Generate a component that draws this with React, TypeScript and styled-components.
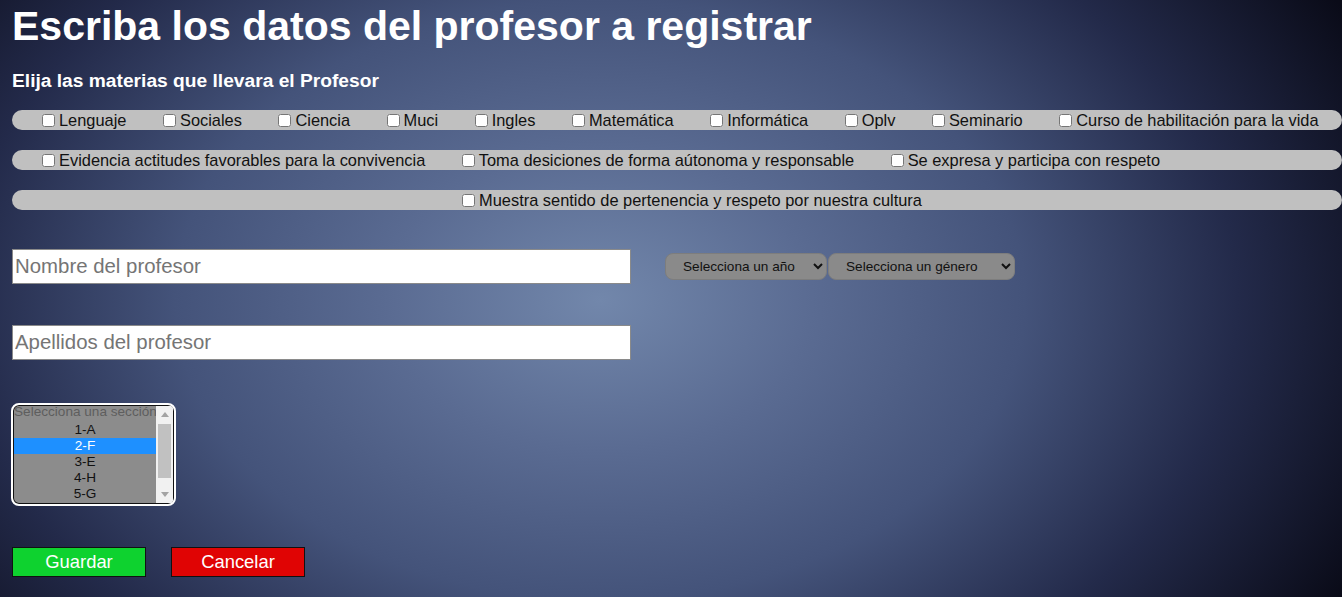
import React from "react";
import styled, { createGlobalStyle } from "styled-components";

const GlobalStyle = createGlobalStyle`
  html, body {
    margin: 0;
    height: 100%;
  }
  body {
    overflow: hidden;
    font-family: "Liberation Sans", Arial, sans-serif;
    background: radial-gradient(ellipse 850px 600px at 600px 300px, #7287ab 0%, #5a6b92 25%, #44537a 50%, #232a4a 75%, #0a0b18 100%);
  }
`;

const Page = styled.div`
  padding: 3px 0 0 12px;
  display: flex;
  flex-direction: column;
  align-items: flex-start;
`;

const Title = styled.h1`
  margin: 0;
  font-size: 41px;
  line-height: 46px;
  font-weight: bold;
  color: #fff;
`;

const Subtitle = styled.h3`
  margin: 21px 0 0;
  font-size: 19.2px;
  line-height: 22px;
  font-weight: bold;
  color: #fff;
`;

const Bars = styled.div`
  margin-top: 18px;
  display: flex;
  flex-direction: column;
  gap: 20px;
`;

const Bar = styled.div<{ $center?: boolean }>`
  width: 1330px;
  height: 20px;
  box-sizing: border-box;
  padding-left: 26px;
  display: flex;
  align-items: center;
  justify-content: ${(p) => (p.$center ? "center" : "flex-start")};
  gap: 32.5px;
  background: #c0c0c0;
  border-radius: 10px;
`;

const Item = styled.label`
  display: inline-flex;
  align-items: center;
  font-size: 16.4px;
  color: #111;
  white-space: nowrap;
`;

const Check = styled.input`
  margin: 3px 4px 3px 4px;
  width: 13px;
  height: 13px;
`;

const FieldRow = styled.div<{ $top: number }>`
  margin-top: ${(p) => p.$top}px;
  display: flex;
  align-items: center;
  gap: 34px;
`;

const TextInput = styled.input`
  width: 619px;
  height: 35px;
  box-sizing: border-box;
  border: 1px solid #8a8a8a;
  padding: 1px 2px;
  font-family: "Liberation Sans", Arial, sans-serif;
  font-size: 20.4px;
  background: #fff;
  &::placeholder {
    color: #757575;
  }
`;

const SelectGroup = styled.div`
  display: flex;
  gap: 1px;
`;

const Dropdown = styled.select<{ $w: number }>`
  width: ${(p) => p.$w}px;
  height: 27px;
  padding-left: 13px;
  border-radius: 8px;
  border: 1px solid #7d7d7d;
  background-color: #8a8a8a;
  color: #111;
  font-family: "Liberation Sans", Arial, sans-serif;
  font-size: 13.6px;
`;

const ListBox = styled.div`
  margin-top: 43px;
  margin-left: -1px;
  width: 165px;
  height: 103px;
  box-sizing: border-box;
  border: 2px solid #fff;
  border-radius: 8px;
  box-shadow: inset 0 0 0 1px #111;
  padding: 1px;
  display: flex;
  overflow: hidden;
  background: #8c8c8c;
`;

const Viewport = styled.div`
  flex: 1;
  overflow: hidden;
  display: flex;
  flex-direction: column;
`;

const Option = styled.div<{ $selected?: boolean }>`
  flex: none;
  height: 16px;
  line-height: 16px;
  padding: 0 2px;
  font-size: 13.6px;
  text-align: center;
  white-space: nowrap;
  color: ${(p) => (p.$selected ? "#fff" : "#111")};
  background: ${(p) => (p.$selected ? "#1e90ff" : "transparent")};
`;

const PlaceholderOption = styled.div`
  flex: none;
  margin-top: -2px;
  height: 18px;
  line-height: 16px;
  font-size: 13.6px;
  white-space: nowrap;
  color: #5e5e5e;
`;

const ScrollBar = styled.div`
  width: 17px;
  display: flex;
  flex-direction: column;
  background: #f1f1f1;
`;

const ScrollButton = styled.div`
  height: 17px;
  display: flex;
  align-items: center;
  justify-content: center;
`;

const ScrollTrack = styled.div`
  flex: 1;
  padding: 1px 2px 0;
`;

const Thumb = styled.div`
  height: 54px;
  background: #c1c1c1;
`;

const Buttons = styled.div`
  margin-top: 41px;
  display: flex;
  gap: 25px;
`;

const ActionButton = styled.button<{ $tone: "ok" | "cancel" }>`
  width: 134px;
  height: 30px;
  border: 1px solid #111;
  background: ${(p) => (p.$tone === "ok" ? "#0ed22f" : "#e00404")};
  color: #fff;
  font-family: "Liberation Sans", Arial, sans-serif;
  font-size: 18.4px;
  padding: 0;
`;

const row1 = [
  "Lenguaje",
  "Sociales",
  "Ciencia",
  "Muci",
  "Ingles",
  "Matemática",
  "Informática",
  "Oplv",
  "Seminario",
  "Curso de habilitación para la vida",
];

const row2 = [
  "Evidencia actitudes favorables para la convivencia",
  "Toma desiciones de forma aútonoma y responsable",
  "Se expresa y participa con respeto",
];

const row3 = ["Muestra sentido de pertenencia y respeto por nuestra cultura"];

const sections = ["1-A", "2-F", "3-E", "4-H", "5-G"];

const Arrow = ({ up }: { up?: boolean }) => (
  <svg width="8" height="5" viewBox="0 0 8 5">
    <polygon points={up ? "0,5 4,0 8,5" : "0,0 8,0 4,5"} fill="#a3a3a3" />
  </svg>
);

export default function App() {
  return (
    <>
      <GlobalStyle />
      <Page>
        <Title>Escriba los datos del profesor a registrar</Title>
        <Subtitle>Elija las materias que llevara el Profesor</Subtitle>
        <Bars>
          {[row1, row2, row3].map((row, i) => (
            <Bar key={i} $center={i === 2}>
              {row.map((label) => (
                <Item key={label}>
                  <Check type="checkbox" />
                  {label}
                </Item>
              ))}
            </Bar>
          ))}
        </Bars>
        <FieldRow $top={39}>
          <TextInput placeholder="Nombre del profesor" />
          <SelectGroup>
            <Dropdown $w={162} defaultValue="">
              <option value="">Selecciona un año</option>
            </Dropdown>
            <Dropdown $w={187} defaultValue="">
              <option value="">Selecciona un género</option>
            </Dropdown>
          </SelectGroup>
        </FieldRow>
        <FieldRow $top={41}>
          <TextInput placeholder="Apellidos del profesor" />
        </FieldRow>
        <ListBox>
          <Viewport>
            <PlaceholderOption>Selecciona una sección</PlaceholderOption>
            {sections.map((s) => (
              <Option key={s} $selected={s === "2-F"}>
                {s}
              </Option>
            ))}
          </Viewport>
          <ScrollBar>
            <ScrollButton>
              <Arrow up />
            </ScrollButton>
            <ScrollTrack>
              <Thumb />
            </ScrollTrack>
            <ScrollButton>
              <Arrow />
            </ScrollButton>
          </ScrollBar>
        </ListBox>
        <Buttons>
          <ActionButton $tone="ok">Guardar</ActionButton>
          <ActionButton $tone="cancel">Cancelar</ActionButton>
        </Buttons>
      </Page>
    </>
  );
}
